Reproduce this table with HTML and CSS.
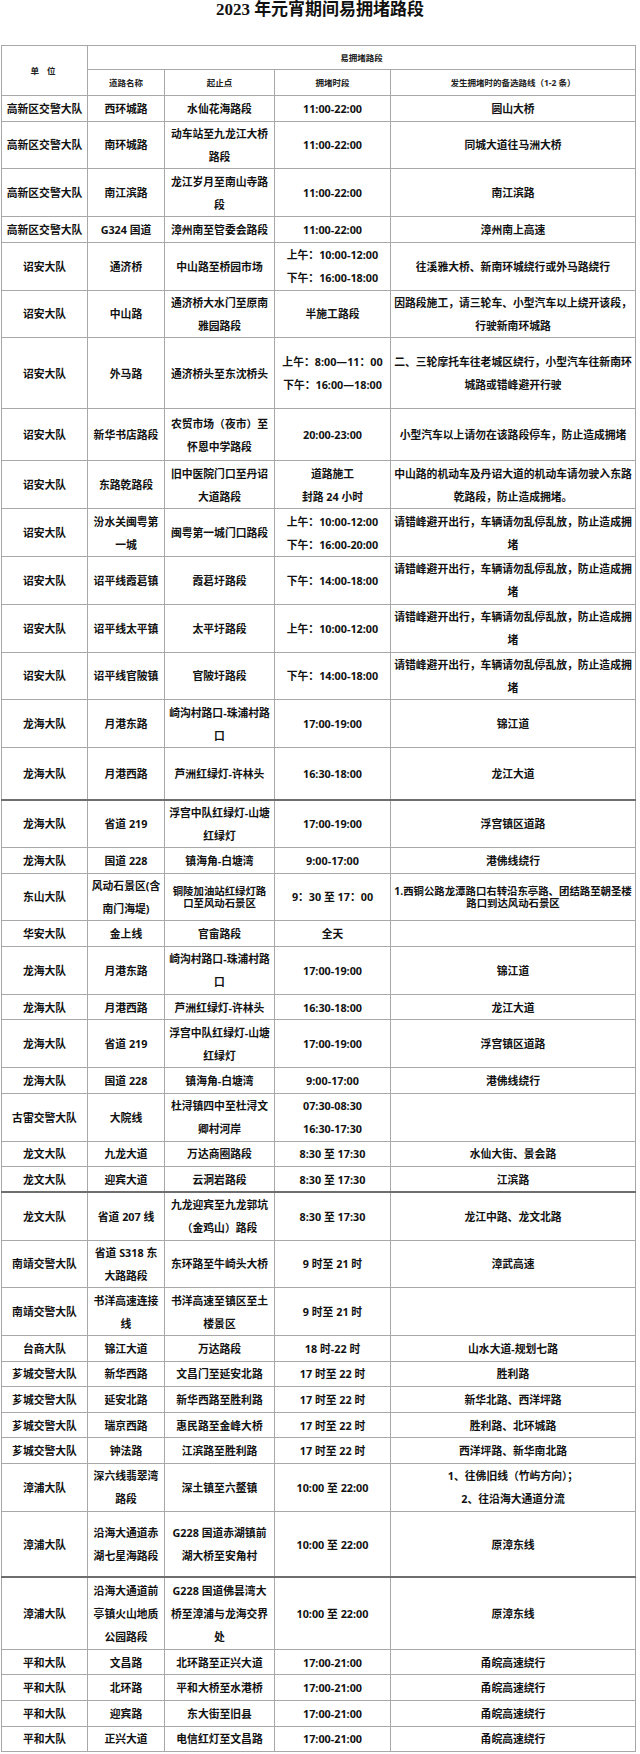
FILE: index.html
```html
<!DOCTYPE html>
<html lang="zh-CN">
<head>
<meta charset="utf-8">
<title>2023年元宵期间易拥堵路段</title>
<link rel="stylesheet" href="styles.css">
</head>
<body>
<h1 class="title">2023 年元宵期间易拥堵路段</h1>
<div class="wrap">
<table class="grid">
<colgroup>
<col class="c1"><col class="c2"><col class="c3"><col class="c4"><col class="c5">
</colgroup>
<thead>
<tr class="hd1"><th rowspan="2" class="unit">单 位</th><th colspan="4">易拥堵路段</th></tr>
<tr class="hd2"><th>道路名称</th><th>起止点</th><th>拥堵时段</th><th>发生拥堵时的备选路线（1-2 条）</th></tr>
</thead>
<tbody>
<tr class="s"><td>高新区交警大队</td><td>西环城路</td><td>水仙花海路段</td><td>11:00-22:00</td><td>圆山大桥</td></tr>
<tr class="d"><td>高新区交警大队</td><td>南环城路</td><td>动车站至九龙江大桥<br>路段</td><td>11:00-22:00</td><td>同城大道往马洲大桥</td></tr>
<tr class="d"><td>高新区交警大队</td><td>南江滨路</td><td>龙江岁月至南山寺路<br>段</td><td>11:00-22:00</td><td>南江滨路</td></tr>
<tr class="s"><td>高新区交警大队</td><td>G324 国道</td><td>漳州南至管委会路段</td><td>11:00-22:00</td><td>漳州南上高速</td></tr>
<tr class="d"><td>诏安大队</td><td>通济桥</td><td>中山路至桥园市场</td><td>上午：10:00-12:00<br>下午：16:00-18:00</td><td>往溪雅大桥、新南环城绕行或外马路绕行</td></tr>
<tr class="d"><td>诏安大队</td><td>中山路</td><td>通济桥大水门至原南<br>雅园路段</td><td>半施工路段</td><td>因路段施工，请三轮车、小型汽车以上绕开该段，<br>行驶新南环城路</td></tr>
<tr class="h71"><td>诏安大队</td><td>外马路</td><td>通济桥头至东沈桥头</td><td>上午：8:00—11：00<br>下午：16:00—18:00</td><td>二、三轮摩托车往老城区绕行，小型汽车往新南环<br>城路或错峰避开行驶</td></tr>
<tr class="h52"><td>诏安大队</td><td>新华书店路段</td><td>农贸市场（夜市）至<br>怀恩中学路段</td><td>20:00-23:00</td><td>小型汽车以上请勿在该路段停车，防止造成拥堵</td></tr>
<tr class="d"><td>诏安大队</td><td>东路乾路段</td><td>旧中医院门口至丹诏<br>大道路段</td><td>道路施工<br>封路 24 小时</td><td>中山路的机动车及丹诏大道的机动车请勿驶入东路<br>乾路段，防止造成拥堵。</td></tr>
<tr class="d"><td>诏安大队</td><td>汾水关闽粤第<br>一城</td><td>闽粤第一城门口路段</td><td>上午：10:00-12:00<br>下午：16:00-20:00</td><td>请错峰避开出行，车辆请勿乱停乱放，防止造成拥<br>堵</td></tr>
<tr class="d"><td>诏安大队</td><td>诏平线霞葛镇</td><td>霞葛圩路段</td><td>下午：14:00-18:00</td><td>请错峰避开出行，车辆请勿乱停乱放，防止造成拥<br>堵</td></tr>
<tr class="d"><td>诏安大队</td><td>诏平线太平镇</td><td>太平圩路段</td><td>上午：10:00-12:00</td><td>请错峰避开出行，车辆请勿乱停乱放，防止造成拥<br>堵</td></tr>
<tr class="d"><td>诏安大队</td><td>诏平线官陂镇</td><td>官陂圩路段</td><td>下午：14:00-18:00</td><td>请错峰避开出行，车辆请勿乱停乱放，防止造成拥<br>堵</td></tr>
<tr class="d"><td>龙海大队</td><td>月港东路</td><td>崎沟村路口-珠浦村路<br>口</td><td>17:00-19:00</td><td>锦江道</td></tr>
<tr class="h52 sep"><td>龙海大队</td><td>月港西路</td><td>芦洲红绿灯-许林头</td><td>16:30-18:00</td><td>龙江大道</td></tr>
<tr class="d"><td>龙海大队</td><td>省道 219</td><td>浮宫中队红绿灯-山塘<br>红绿灯</td><td>17:00-19:00</td><td>浮宫镇区道路</td></tr>
<tr class="s"><td>龙海大队</td><td>国道 228</td><td>镇海角-白塘湾</td><td>9:00-17:00</td><td>港佛线绕行</td></tr>
<tr class="d"><td>东山大队</td><td>风动石景区(含<br>南门海堤)</td><td class="tight">铜陵加油站红绿灯路<br>口至风动石景区</td><td>9：30 至 17：00</td><td class="tight">1.西铜公路龙潭路口右转沿东亭路、团结路至朝圣楼<br>路口到达风动石景区</td></tr>
<tr class="s"><td>华安大队</td><td>金上线</td><td>官畲路段</td><td>全天</td><td></td></tr>
<tr class="d"><td>龙海大队</td><td>月港东路</td><td>崎沟村路口-珠浦村路<br>口</td><td>17:00-19:00</td><td>锦江道</td></tr>
<tr class="s"><td>龙海大队</td><td>月港西路</td><td>芦洲红绿灯-许林头</td><td>16:30-18:00</td><td>龙江大道</td></tr>
<tr class="d"><td>龙海大队</td><td>省道 219</td><td>浮宫中队红绿灯-山塘<br>红绿灯</td><td>17:00-19:00</td><td>浮宫镇区道路</td></tr>
<tr class="s"><td>龙海大队</td><td>国道 228</td><td>镇海角-白塘湾</td><td>9:00-17:00</td><td>港佛线绕行</td></tr>
<tr class="d"><td>古雷交警大队</td><td>大院线</td><td>杜浔镇四中至杜浔文<br>卿村河岸</td><td>07:30-08:30<br>16:30-17:30</td><td></td></tr>
<tr class="s"><td>龙文大队</td><td>九龙大道</td><td>万达商圈路段</td><td>8:30 至 17:30</td><td>水仙大街、景会路</td></tr>
<tr class="s sep"><td>龙文大队</td><td>迎宾大道</td><td>云洞岩路段</td><td>8:30 至 17:30</td><td>江滨路</td></tr>
<tr class="d"><td>龙文大队</td><td>省道 207 线</td><td>九龙迎宾至九龙郭坑<br>（金鸡山）路段</td><td>8:30 至 17:30</td><td>龙江中路、龙文北路</td></tr>
<tr class="d"><td>南靖交警大队</td><td>省道 S318 东<br>大路路段</td><td>东环路至牛崎头大桥</td><td>9 时至 21 时</td><td>漳武高速</td></tr>
<tr class="d"><td>南靖交警大队</td><td>书洋高速连接<br>线</td><td>书洋高速至镇区至土<br>楼景区</td><td>9 时至 21 时</td><td></td></tr>
<tr class="s"><td>台商大队</td><td>锦江大道</td><td>万达路段</td><td>18 时-22 时</td><td>山水大道-规划七路</td></tr>
<tr class="s"><td>芗城交警大队</td><td>新华西路</td><td>文昌门至延安北路</td><td>17 时至 22 时</td><td>胜利路</td></tr>
<tr class="s"><td>芗城交警大队</td><td>延安北路</td><td>新华西路至胜利路</td><td>17 时至 22 时</td><td>新华北路、西洋坪路</td></tr>
<tr class="s"><td>芗城交警大队</td><td>瑞京西路</td><td>惠民路至金峰大桥</td><td>17 时至 22 时</td><td>胜利路、北环城路</td></tr>
<tr class="s"><td>芗城交警大队</td><td>钟法路</td><td>江滨路至胜利路</td><td>17 时至 22 时</td><td>西洋坪路、新华南北路</td></tr>
<tr class="d"><td>漳浦大队</td><td>深六线翡翠湾<br>路段</td><td>深土镇至六鳌镇</td><td>10:00 至 22:00</td><td>1、往佛旧线（竹屿方向）；<br>2、往沿海大通道分流</td></tr>
<tr class="h66 sep"><td>漳浦大队</td><td>沿海大通道赤<br>湖七星海路段</td><td>G228 国道赤湖镇前<br>湖大桥至安角村</td><td>10:00 至 22:00</td><td>原漳东线</td></tr>
<tr class="h72"><td>漳浦大队</td><td>沿海大通道前<br>亭镇火山地质<br>公园路段</td><td>G228 国道佛昙湾大<br>桥至漳浦与龙海交界<br>处</td><td>10:00 至 22:00</td><td>原漳东线</td></tr>
<tr class="s"><td>平和大队</td><td>文昌路</td><td>北环路至正兴大道</td><td>17:00-21:00</td><td>甬皖高速绕行</td></tr>
<tr class="s"><td>平和大队</td><td>北环路</td><td>平和大桥至水港桥</td><td>17:00-21:00</td><td>甬皖高速绕行</td></tr>
<tr class="s"><td>平和大队</td><td>迎宾路</td><td>东大街至旧县</td><td>17:00-21:00</td><td>甬皖高速绕行</td></tr>
<tr class="s"><td>平和大队</td><td>正兴大道</td><td>电信红灯至文昌路</td><td>17:00-21:00</td><td>甬皖高速绕行</td></tr>
</tbody>
</table>
</div>
</body>
</html>
```
FILE: styles.css
```css
html, body {
  margin: 0;
  padding: 0;
  background: #ffffff;
}

body {
  font-family: "Open Sans", "Noto Sans CJK SC", sans-serif;
  color: #111111;
}

.title {
  margin: 0 0 25px;
  font-family: "Liberation Serif", "Noto Sans CJK SC", serif;
  font-size: 17px;
  line-height: 20px;
  font-weight: bold;
  text-align: center;
  color: #111111;
}

.wrap {
  padding-left: 1px;
}

.grid {
  width: 634px;
  border-collapse: collapse;
  table-layout: fixed;
}

.c1 { width: 86px; }
.c2 { width: 77px; }
.c3 { width: 110px; }
.c4 { width: 116px; }
.c5 { width: 245px; }

.grid th,
.grid td {
  border: 1px solid #a8a8a8;
  padding: 0 2px;
  text-align: center;
  vertical-align: middle;
  white-space: nowrap;
  overflow: hidden;
  font-weight: bold;
}

.grid th {
  font-size: 8.5px;
  line-height: 12px;
  color: #222222;
}

.grid th.unit {
  letter-spacing: 3px;
}

.grid td {
  font-size: 10.8px;
  line-height: 23px;
}

.grid td.tight {
  font-size: 10.4px;
  line-height: 12px;
}

.hd1 { height: 24px; }
.hd2 { height: 26px; }

.s { height: 25.6px; }
.d { height: 47.8px; }
.h52 { height: 52px; }
.h66 { height: 66px; }
.h71 { height: 71px; }
.h72 { height: 72px; }

.sep td {
  border-bottom: 2px solid #6e6e6e;
}
```
